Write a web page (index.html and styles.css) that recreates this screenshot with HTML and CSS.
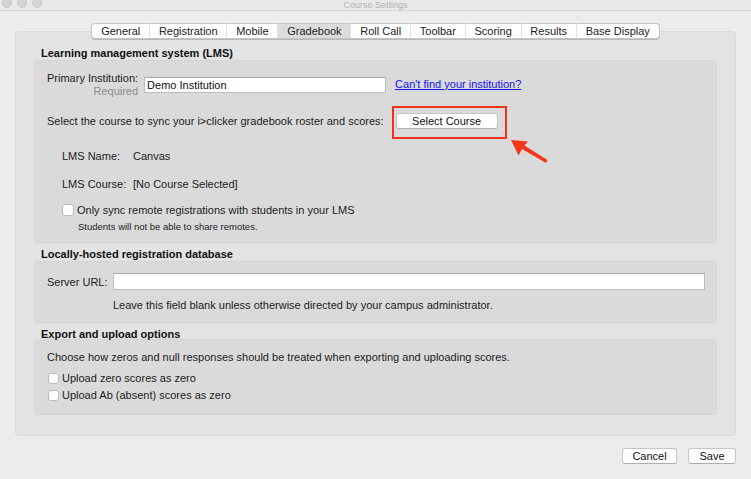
FILE: index.html
```html
<!DOCTYPE html>
<html lang="en">
<head>
    <meta charset="UTF-8">
    <meta name="viewport" content="width=device-width, initial-scale=1.0">
    <title>Course Settings</title>
    <link rel="stylesheet" href="styles.css">
</head>
<body>

    <div class="titlebar">
        <div class="lights">
            <span class="light"></span>
            <span class="light"></span>
            <span class="light"></span>
        </div>
        <p class="window-title">Course Settings</p>
    </div>

    <main class="window">
        <nav class="tabs">
            <button class="tab">General</button>
            <button class="tab">Registration</button>
            <button class="tab">Mobile</button>
            <button class="tab active">Gradebook</button>
            <button class="tab">Roll Call</button>
            <button class="tab">Toolbar</button>
            <button class="tab">Scoring</button>
            <button class="tab">Results</button>
            <button class="tab">Base Display</button>
        </nav>

        <div class="panel">
            <h2 class="group-title">Learning management system (LMS)</h2>
            <div class="group lms">
                <div class="row inst-row">
                    <div class="inst-label">
                        <span>Primary Institution:</span>
                        <span class="required">Required</span>
                    </div>
                    <input class="field inst-field" type="text" value="Demo Institution">
                    <a class="link" href="#">Can't find your institution?</a>
                </div>

                <div class="row course-row">
                    <span>Select the course to sync your i&gt;clicker gradebook roster and scores:</span>
                    <span class="highlight">
                        <button class="mac-btn select-btn">Select Course</button>
                        <svg class="arrow" width="45" height="32" viewBox="0 0 45 32">
                            <path d="M5 5 L22 6.5 L18.5 10.5 L41.5 25 L40 28 L16 14 L12.5 20.5 Z" fill="#f4361d"/>
                        </svg>
                    </span>
                </div>

                <div class="row info-row first">
                    <span class="info-label">LMS Name:</span>
                    <span>Canvas</span>
                </div>
                <div class="row info-row second">
                    <span class="info-label">LMS Course:</span>
                    <span>[No Course Selected]</span>
                </div>

                <label class="row check-row sync-check">
                    <span class="checkbox"></span>
                    <span>Only sync remote registrations with students in your LMS</span>
                </label>
                <p class="note">Students will not be able to share remotes.</p>
            </div>

            <h2 class="group-title second">Locally-hosted registration database</h2>
            <div class="group local">
                <div class="row server-row">
                    <span class="server-label">Server URL:</span>
                    <input class="field server-field" type="text">
                </div>
                <p class="hint">Leave this field blank unless otherwise directed by your campus administrator.</p>
            </div>

            <h2 class="group-title third">Export and upload options</h2>
            <div class="group export">
                <p class="export-text">Choose how zeros and null responses should be treated when exporting and uploading scores.</p>
                <label class="row check-row first">
                    <span class="checkbox small"></span>
                    <span>Upload zero scores as zero</span>
                </label>
                <label class="row check-row second">
                    <span class="checkbox small"></span>
                    <span>Upload Ab (absent) scores as zero</span>
                </label>
            </div>
        </div>

        <div class="footer">
            <button class="mac-btn cancel-btn">Cancel</button>
            <button class="mac-btn save-btn">Save</button>
        </div>
    </main>

</body>
</html>
```

FILE: styles.css
```css
*{
    margin: 0;
    padding: 0;
    box-sizing: border-box;
}

body{
    background-color: #ececec;
    font-family: "Helvetica Neue", "Liberation Sans", Arial, sans-serif;
    font-size: 11px;
    color: #1c1c1c;
}

/* title bar */

.titlebar{
    height: 11px;
    background-color: #e9e9e9;
    border-bottom: 1px solid #d6d6d6;
    position: relative;
    overflow: hidden;
}

.lights{
    display: flex;
    gap: 5px;
    padding-left: 2px;
    margin-top: -2px;
}

.light{
    width: 10px;
    height: 10px;
    border-radius: 50%;
    background-color: #d4d4d4;
    border: 1px solid #c8c8c8;
}

.window-title{
    position: absolute;
    left: 0;
    right: 0;
    top: 0;
    text-align: center;
    font-size: 9px;
    line-height: 10px;
    color: #b3b3b3;
}

/* window */

.window{
    padding: 0 15px;
}

.tabs{
    display: flex;
    justify-content: center;
    margin-top: 12px;
    position: relative;
    z-index: 1;
}

.tab{
    height: 16px;
    padding: 0 8.8px;
    font-family: inherit;
    font-size: 11px;
    color: #1c1c1c;
    background-color: #fff;
    border: 1px solid #c4c4c4;
    border-left: 1px solid #e2e2e2;
    border-right: none;
    box-shadow: 0 1px 0 #b8b8b8;
}

.tab:first-child{
    border-left: 1px solid #c4c4c4;
    border-radius: 4px 0 0 4px;
}

.tab:last-child{
    border-right: 1px solid #c4c4c4;
    border-radius: 0 4px 4px 0;
}

.tab.active{
    background-color: #dcdcdc;
}

.panel{
    margin-top: -8px;
    padding: 14px 18px 20px 18px;
    background-color: #e3e3e3;
    border: 1px solid #dadada;
    border-radius: 4px;
}

.group-title{
    font-size: 11px;
    line-height: 14px;
    font-weight: bold;
    padding-left: 7px;
    color: #111;
}

.group-title.second{
    margin-top: 4px;
}

.group-title.third{
    margin-top: 6px;
    line-height: 10px;
}

.group{
    background-color: #dadada;
    border: 1px solid #d5d5d5;
    border-radius: 4px;
    padding: 0 12px;
}

.row{
    display: flex;
    align-items: center;
}

/* LMS group */

.lms{
    padding-top: 11px;
    padding-bottom: 9px;
}

.inst-row{
    align-items: flex-start;
    height: 26px;
}

.inst-label{
    display: flex;
    flex-direction: column;
    align-items: flex-end;
    line-height: 13px;
}

.required{
    color: #8c8c8c;
}

.field{
    height: 16px;
    border: 1px solid #bdbdbd;
    border-top-color: #a9a9a9;
    background-color: #fff;
    font-family: inherit;
    font-size: 11px;
    padding: 0 2px;
    color: #111;
    outline: none;
}

.inst-field{
    width: 242px;
    margin-top: 5px;
    margin-left: 6px;
}

.link{
    color: #1414f0;
    margin-left: 9px;
    margin-top: 6px;
    line-height: 13px;
}

.course-row{
    margin-top: 15px;
    height: 16px;
}

.highlight{
    position: relative;
    margin-left: 12px;
}

.highlight::after{
    content: "";
    position: absolute;
    left: -4px;
    top: -7px;
    right: -9px;
    bottom: -10px;
    border: 2px solid #f2321e;
}

.arrow{
    position: absolute;
    left: 110px;
    top: 22px;
}

.mac-btn{
    height: 16px;
    font-family: inherit;
    font-size: 11px;
    color: #111;
    background-color: #fff;
    border: 1px solid #c6c6c6;
    border-bottom-color: #aeaeae;
    border-radius: 3px;
    display: block;
}

.select-btn{
    width: 102px;
}

.info-row{
    line-height: 14px;
    padding-left: 15px;
}

.info-row.first{
    margin-top: 20px;
}

.info-row.second{
    margin-top: 14px;
}

.info-label{
    width: 71px;
}

.check-row{
    line-height: 14px;
}

.sync-check{
    margin-top: 12px;
    padding-left: 15px;
}

.checkbox{
    width: 12px;
    height: 12px;
    background-color: #fff;
    border: 1px solid #bcbcbc;
    border-radius: 3px;
    margin-right: 3px;
}

.checkbox.small{
    width: 11px;
    height: 11px;
}

.note{
    font-size: 9.5px;
    line-height: 12px;
    margin-top: 4px;
    padding-left: 31px;
}

/* local group */

.local{
    padding-top: 11px;
    padding-bottom: 10px;
}

.server-row{
    height: 17px;
}

.server-label{
    width: 66px;
}

.server-field{
    flex: 1;
    height: 17px;
    margin-right: -1px;
}

.hint{
    line-height: 14px;
    margin-top: 8px;
    padding-left: 66px;
}

/* export group */

.export{
    padding-top: 10px;
    padding-bottom: 12px;
}

.export-text{
    line-height: 14px;
}

.export .check-row{
    padding-left: 1px;
}

.export .check-row.first{
    margin-top: 7px;
}

.export .check-row.second{
    margin-top: 3px;
}

/* footer */

.footer{
    display: flex;
    justify-content: flex-end;
    gap: 11px;
    margin-top: 12px;
}

.cancel-btn{
    width: 55px;
}

.save-btn{
    width: 48px;
}
```
